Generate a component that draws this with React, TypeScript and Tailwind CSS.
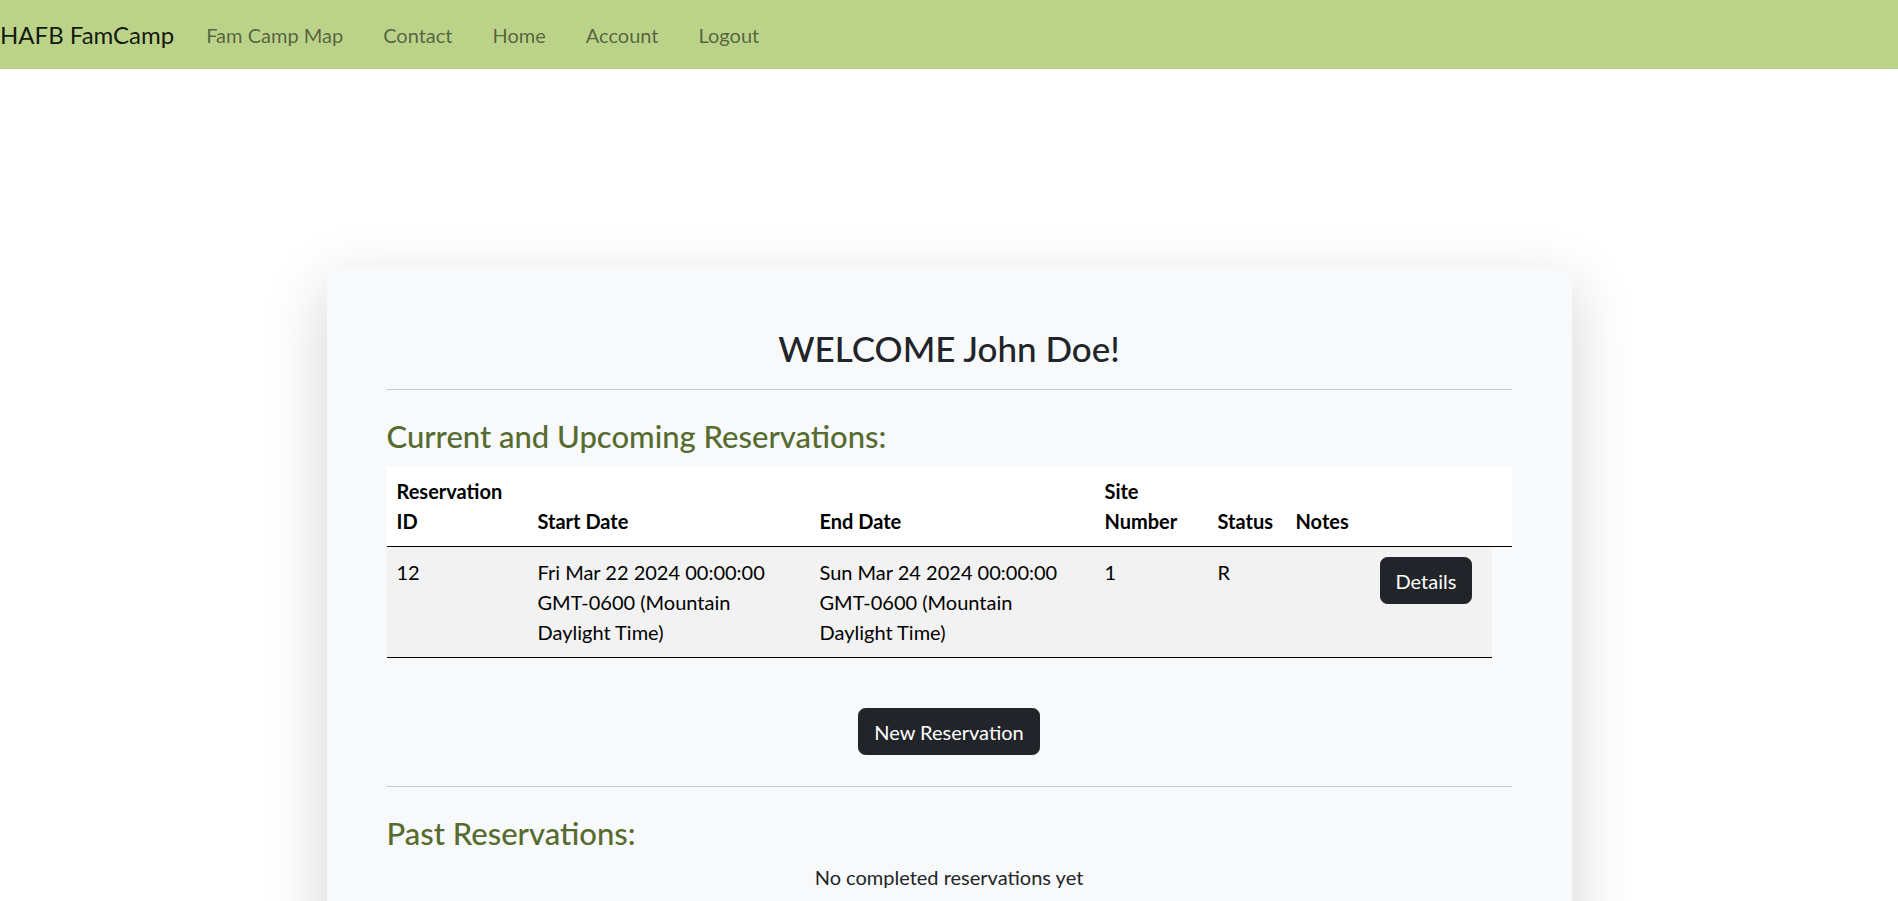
import React from 'react'

const navLinks = ['Fam Camp Map', 'Contact', 'Home', 'Account', 'Logout']

const reservations = [
  {
    id: '12',
    start: ['Fri Mar 22 2024 00:00:00', 'GMT-0600 (Mountain', 'Daylight Time)'],
    end: ['Sun Mar 24 2024 00:00:00', 'GMT-0600 (Mountain', 'Daylight Time)'],
    site: '1',
    status: 'R',
    notes: '',
  },
]

function Navbar() {
  return (
    <nav className="h-[69px] bg-[#bbd389] flex items-center">
      <a href="#" className="text-[24px] leading-[36px] text-black/90 mr-[12px]">
        HAFB FamCamp
      </a>
      <ul className="flex items-center">
        {navLinks.map((link) => (
          <li key={link}>
            <a href="#" className="block px-[20px] text-[20px] leading-[30px] text-black/55">
              {link}
            </a>
          </li>
        ))}
      </ul>
    </nav>
  )
}

function DarkButton({ children }: { children: React.ReactNode }) {
  return (
    <button className="px-[15px] py-[7.5px] text-[20px] leading-[30px] text-white bg-[#212529] border border-[#212529] rounded-[7.5px]">
      {children}
    </button>
  )
}

function Lines({ lines }: { lines: string[] }) {
  return (
    <>
      {lines.map((l, i) => (
        <span key={i} className="block">
          {l}
        </span>
      ))}
    </>
  )
}

function ReservationTable() {
  const th = 'p-[10px] bg-white text-left align-bottom font-bold border-b border-black'
  const td = 'p-[10px] bg-[#f2f2f2] align-top border-b border-black'
  return (
    <table className="mt-[11px] w-full table-fixed border-collapse text-[20px] leading-[30px] text-black">
      <colgroup>
        <col className="w-[141px]" />
        <col className="w-[282px]" />
        <col className="w-[285px]" />
        <col className="w-[113px]" />
        <col className="w-[78px]" />
        <col className="w-[84px]" />
        <col className="w-[122px]" />
        <col className="w-[20px]" />
      </colgroup>
      <thead>
        <tr>
          <th className={th}>Reservation ID</th>
          <th className={th}>Start Date</th>
          <th className={th}>End Date</th>
          <th className={th}>Site Number</th>
          <th className={`${th} whitespace-nowrap`}>Status</th>
          <th className={`${th} whitespace-nowrap`}>Notes</th>
          <th className={th}></th>
          <th className={th}></th>
        </tr>
      </thead>
      <tbody>
        {reservations.map((r) => (
          <tr key={r.id}>
            <td className={td}>{r.id}</td>
            <td className={td}>
              <Lines lines={r.start} />
            </td>
            <td className={td}>
              <Lines lines={r.end} />
            </td>
            <td className={td}>{r.site}</td>
            <td className={td}>{r.status}</td>
            <td className={td}>{r.notes}</td>
            <td className={td}>
              <DarkButton>Details</DarkButton>
            </td>
          </tr>
        ))}
      </tbody>
    </table>
  )
}

export default function App() {
  return (
    <div className="min-h-screen bg-white font-['Lato',sans-serif]">
      <Navbar />
      <main className="w-[1245px] mx-auto mt-[198px] bg-[#f8f9fa] shadow-[0_20px_60px_rgba(0,0,0,0.175)] px-[60px] pt-[60px] pb-[60px]">
        <h2 className="text-center text-[35px] leading-[42px] font-medium text-[#212529]">
          WELCOME John Doe!
        </h2>
        <hr className="my-[20px] border-0 border-t border-[#c4c6c9]" />

        <h3 className="mt-[28px] text-[31px] leading-[37px] font-medium text-[#556b2f]">
          Current and Upcoming Reservations:
        </h3>
        <ReservationTable />

        <div className="mt-[50px] flex justify-center">
          <DarkButton>New Reservation</DarkButton>
        </div>

        <hr className="mt-[31px] border-0 border-t border-[#c4c6c9]" />

        <h3 className="mt-[28px] text-[31px] leading-[37px] font-medium text-[#556b2f]">
          Past Reservations:
        </h3>
        <p className="mt-[10px] text-center text-[20px] leading-[30px] text-[#212529]">
          No completed reservations yet
        </p>
      </main>
    </div>
  )
}
